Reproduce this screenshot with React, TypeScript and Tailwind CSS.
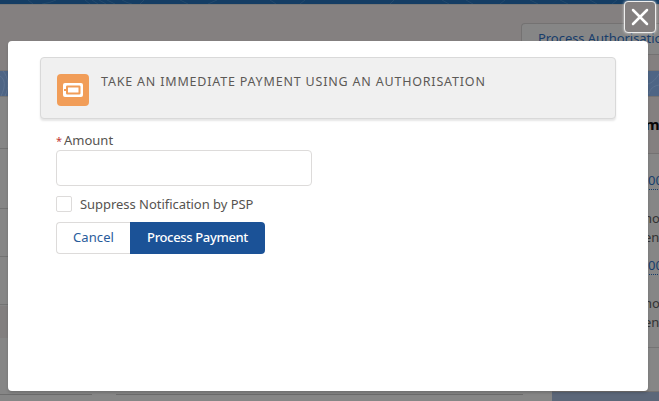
import React from 'react';

function TopContours() {
  return (
    <svg className="h-1 w-full text-[#2a4f70]" viewBox="0 0 659 4" fill="none" stroke="currentColor" strokeWidth="0.7">
      <path d="M28 0l5 4M42 4q8-1 14-4M85 0l5 4M92 0l6 4M99 0l7 4M107 0l8 4M122 0q5 3 10 4M140 4l4-4M180 0l8 4M208 4l9-4M270 0l6 4M300 4l5-4M390 4l4-4M442 0l7 4M466 0l7 4M500 4l5-4M530 0l8 4M560 0l8 4M590 0l7 4M612 4l5-4" />
    </svg>
  );
}

function BandContours() {
  return (
    <svg className="h-full w-full text-[#5c7290]" viewBox="0 0 659 25" fill="none" stroke="currentColor" strokeWidth="1">
      <path d="M0 5C5 8 6 15 1 25M3 0C9 7 9 17 5 25M648 13C652 12 656 8 659 3M649 23C650 18 653 15 659 14" />
    </svg>
  );
}

function Backdrop() {
  return (
    <div className="flex h-full w-full flex-col bg-[#868686]">
      <div className="h-1 shrink-0 overflow-hidden bg-[#143d64]">
        <TopContours />
      </div>
      <header className="flex h-[67px] shrink-0 justify-end overflow-hidden border-b border-t border-b-[#777575] border-t-[#777] bg-[#848080] pt-[18px]">
        <div className="h-8 w-[138px] shrink-0 overflow-hidden whitespace-nowrap rounded-l border border-r-0 border-[#747272] bg-[#868686] pl-4 text-[13px] leading-[29px] tracking-[-0.05px] text-[#173d6b]">
          Process Authorisation
        </div>
      </header>
      <div className="h-[25px] shrink-0 bg-[#4e6585]">
        <BandContours />
      </div>
      <main className="flex min-h-0 flex-1">
        <section className="flex w-[552px] flex-col border-t border-[#777]">
          <div className="h-[52px] border-b border-[#737373]" />
          <div className="h-[60px] border-b border-[#737373]" />
          <div className="h-12 border-b border-[#737373]" />
          <div className="h-12 border-b border-[#737373]" />
          <div className="mt-px h-8 bg-[#827f7f]" />
          <div className="mt-14 flex gap-6">
            <div className="h-px w-[92px] bg-[#6d6d6d]" />
            <div className="h-px w-[407px] bg-[#6d6d6d]" />
          </div>
        </section>
        <aside className="flex flex-1 flex-col overflow-hidden text-[13px] leading-[19px] text-[#333]">
          <div className="h-[58px] shrink-0 border-b border-t border-[#747272] bg-[#848080] pl-[93px] pt-[18px] text-[15px] font-bold text-[#080707]">m</div>
          <div className="h-[194px] shrink-0 border-b border-[#747474] pl-[92px] pt-[17px]">
            <div className="h-[19px] w-20 border-b border-dotted border-[#173d6b] pl-1 leading-[18px] text-[#173d6b]">00</div>
            <div className="pt-[19px]">no</div>
            <div>en</div>
            <div className="mt-[9px] h-[19px] w-20 border-b border-dotted border-[#173d6b] pl-1 leading-[18px] text-[#173d6b]">00</div>
            <div className="pt-[19px]">no</div>
            <div>en</div>
          </div>
          <div className="h-11 shrink-0 border-b border-[#747272]" />
          <div className="flex-1 bg-[#5c6779]" />
        </aside>
      </main>
    </div>
  );
}

function PaymentIcon() {
  return (
    <svg className="h-8 w-8 shrink-0 rounded bg-[#f19d58]" viewBox="0 0 32 32">
      <rect x="6" y="9" width="20" height="14" rx="2" fill="#fff" />
      <rect x="10" y="12.5" width="12.5" height="7" rx="0.3" fill="#fff" stroke="#f19d58" strokeWidth="2" />
      <path d="M7 15h2.5v2H7z" fill="#f19d58" />
    </svg>
  );
}

function Modal() {
  return (
    <div className="absolute left-2 top-[41px] h-[350px] w-[640px] rounded bg-white px-8 pt-4 shadow-[0_2px_3px_rgba(0,0,0,0.16)]">
      <div className="flex h-[62px] w-[576px] gap-3 rounded border border-[#d9d9d9] bg-[#f0f0f0] pl-4 pt-4 shadow-[0_2px_2px_rgba(0,0,0,0.1)]">
        <PaymentIcon />
        <h1 className="whitespace-nowrap text-[12.5px] leading-4 tracking-[0.81px] text-[#5c5956]">TAKE AN IMMEDIATE PAYMENT USING AN AUTHORISATION</h1>
      </div>
      <form className="px-4 pt-3" onSubmit={(event) => event.preventDefault()}>
        <label htmlFor="amount" className="flex h-[19px] gap-[2px] text-[13px] leading-[19px] text-[#565350]">
          <span className="w-[6px] text-[11px] text-[#c23934]">*</span>Amount
        </label>
        <input id="amount" className="block h-9 w-64 rounded border border-[#dddbda] bg-white outline-none" />
        <label className="mt-2 flex h-5 items-center gap-2 text-[13px] tracking-[-0.04px] text-[#565350]">
          <input type="checkbox" className="h-4 w-4 appearance-none rounded-[2px] border border-[#dddbda] bg-white" />
          <span className="pt-[2px]">Suppress Notification by PSP</span>
        </label>
        <div className="mt-2 flex h-8 w-[209px] text-[13px]">
          <button className="w-[74px] rounded-l border border-r-0 border-[#dddbda] tracking-[0.1px] text-[#285b9b]">Cancel</button>
          <button className="flex-1 whitespace-nowrap rounded-r bg-[#1b5297] font-medium tracking-[-0.35px] text-white">Process Payment</button>
        </div>
      </form>
    </div>
  );
}

export default function App() {
  return (
    <div className="relative h-[401px] w-[659px] overflow-hidden font-['Noto_Sans',sans-serif]">
      <Backdrop />
      <Modal />
      <button aria-label="Close" className="absolute left-[624px] top-px flex h-8 w-8 items-center justify-center rounded border border-[#eee] bg-[#848080] shadow-[0_0_3px_#ddd]">
        <svg className="h-[18px] w-[18px]" viewBox="0 0 18 18" fill="none" stroke="#fff" strokeWidth="2.5" strokeLinecap="round">
          <path d="M2 2L16 16M16 2L2 16" />
        </svg>
      </button>
    </div>
  );
}
